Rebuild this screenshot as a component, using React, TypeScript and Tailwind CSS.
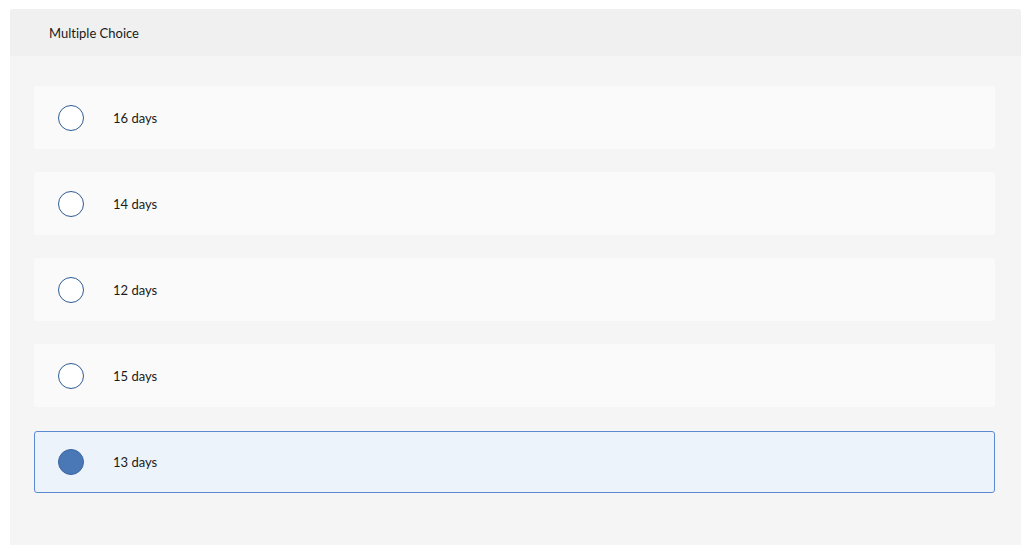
import React from "react";

const options = [
  { label: "16 days", selected: false },
  { label: "14 days", selected: false },
  { label: "12 days", selected: false },
  { label: "15 days", selected: false },
  { label: "13 days", selected: true },
];

export default function App() {
  return (
    <div className="w-[1024px] h-[553px] bg-white pt-[9px] pl-[10px] [font-variant-ligatures:none]" style={{ fontFamily: 'Lato, "Open Sans", "Liberation Sans", sans-serif' }}>
      <div className="w-[1011px] h-[536px] bg-[#f5f5f5] rounded-t-[3px] flex flex-col">
        <div className="h-[47px] bg-[#f0f0f0] rounded-t-[3px] flex items-center pl-[39px] pt-[2px] text-[13px] text-[#1a1a1a]">
          Multiple Choice
        </div>
        <div className="flex flex-col gap-[23px] pt-[30px] pl-[24px] w-[985px]">
          {options.map((o) => (
            <div
              key={o.label}
              className={
                o.selected
                  ? "h-[62px] mt-[1px] rounded-[3px] bg-[#edf3fb] border border-[#5b8ad0] flex items-center pl-[23px]"
                  : "h-[63px] rounded-[3px] bg-[#fafafa] flex items-center pl-[24px]"
              }
            >
              <div
                className={
                  o.selected
                    ? "w-[26px] h-[26px] rounded-full bg-[#4a77b6] border border-[#3a64a0]"
                    : "w-[26px] h-[26px] rounded-full bg-white border border-[#2f5b93]"
                }
              />
              <span className="ml-[29px] pt-[2px] text-[13px] text-[#1a1a1a]">{o.label}</span>
            </div>
          ))}
        </div>
      </div>
    </div>
  );
}
